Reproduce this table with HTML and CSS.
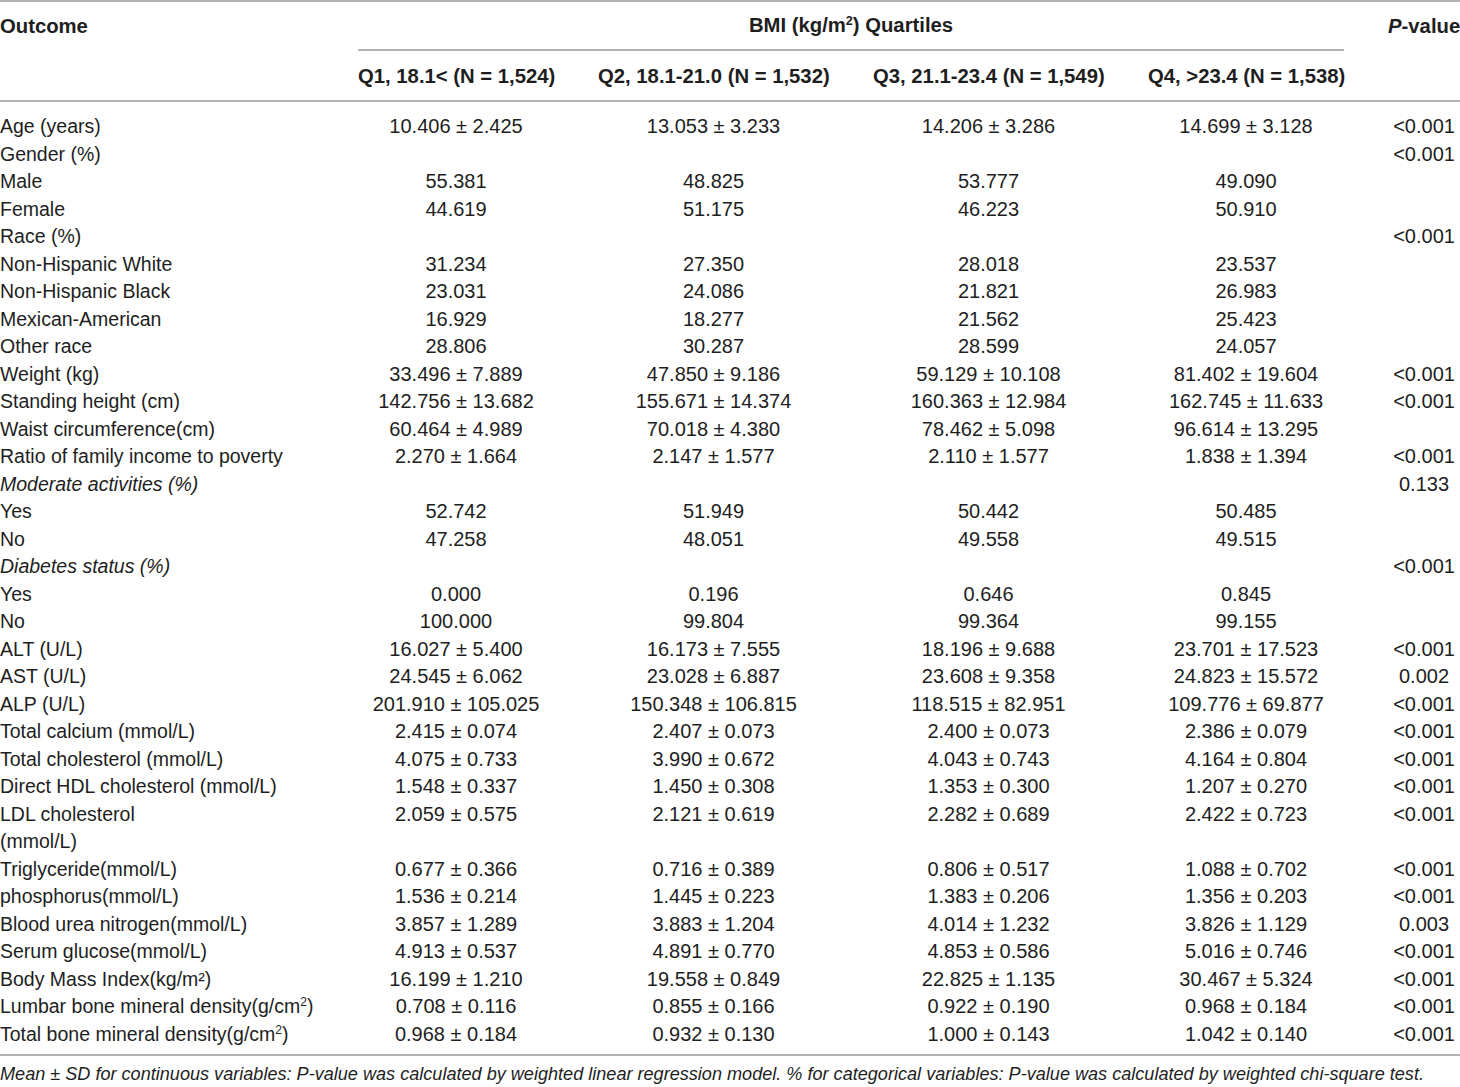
FILE: index.html
```html
<!DOCTYPE html>
<html>
<head>
    <meta charset="UTF-8">
    <title>BMI Quartiles</title>
    <link rel="stylesheet" href="styles.css">
</head>

<body>
    <table class="bmi-table">
        <colgroup>
            <col class="c-label">
            <col class="c-q1">
            <col class="c-q2">
            <col class="c-q3">
            <col class="c-q4">
            <col class="c-p">
        </colgroup>
        <thead>
            <tr class="head-top">
                <th class="label">Outcome</th>
                <th colspan="4" class="group"><div>BMI (kg/m<sup>2</sup>) Quartiles</div></th>
                <th><i>P</i>-value</th>
            </tr>
            <tr class="head-sub">
                <th></th>
                <th>Q1, 18.1&lt; (N = 1,524)</th>
                <th>Q2, 18.1-21.0 (N = 1,532)</th>
                <th>Q3, 21.1-23.4 (N = 1,549)</th>
                <th>Q4, &gt;23.4 (N = 1,538)</th>
                <th></th>
            </tr>
        </thead>
        <tbody>
            <tr><td>Age (years)</td><td>10.406 ± 2.425</td><td>13.053 ± 3.233</td><td>14.206 ± 3.286</td><td>14.699 ± 3.128</td><td>&lt;0.001</td></tr>
            <tr><td>Gender (%)</td><td></td><td></td><td></td><td></td><td>&lt;0.001</td></tr>
            <tr><td>Male</td><td>55.381</td><td>48.825</td><td>53.777</td><td>49.090</td><td></td></tr>
            <tr><td>Female</td><td>44.619</td><td>51.175</td><td>46.223</td><td>50.910</td><td></td></tr>
            <tr><td>Race (%)</td><td></td><td></td><td></td><td></td><td>&lt;0.001</td></tr>
            <tr><td>Non-Hispanic White</td><td>31.234</td><td>27.350</td><td>28.018</td><td>23.537</td><td></td></tr>
            <tr><td>Non-Hispanic Black</td><td>23.031</td><td>24.086</td><td>21.821</td><td>26.983</td><td></td></tr>
            <tr><td>Mexican-American</td><td>16.929</td><td>18.277</td><td>21.562</td><td>25.423</td><td></td></tr>
            <tr><td>Other race</td><td>28.806</td><td>30.287</td><td>28.599</td><td>24.057</td><td></td></tr>
            <tr><td>Weight (kg)</td><td>33.496 ± 7.889</td><td>47.850 ± 9.186</td><td>59.129 ± 10.108</td><td>81.402 ± 19.604</td><td>&lt;0.001</td></tr>
            <tr><td>Standing height (cm)</td><td>142.756 ± 13.682</td><td>155.671 ± 14.374</td><td>160.363 ± 12.984</td><td>162.745 ± 11.633</td><td>&lt;0.001</td></tr>
            <tr><td>Waist circumference(cm)</td><td>60.464 ± 4.989</td><td>70.018 ± 4.380</td><td>78.462 ± 5.098</td><td>96.614 ± 13.295</td><td></td></tr>
            <tr><td>Ratio of family income to poverty</td><td>2.270 ± 1.664</td><td>2.147 ± 1.577</td><td>2.110 ± 1.577</td><td>1.838 ± 1.394</td><td>&lt;0.001</td></tr>
            <tr><td><i>Moderate activities (%)</i></td><td></td><td></td><td></td><td></td><td>0.133</td></tr>
            <tr><td>Yes</td><td>52.742</td><td>51.949</td><td>50.442</td><td>50.485</td><td></td></tr>
            <tr><td>No</td><td>47.258</td><td>48.051</td><td>49.558</td><td>49.515</td><td></td></tr>
            <tr><td><i>Diabetes status (%)</i></td><td></td><td></td><td></td><td></td><td>&lt;0.001</td></tr>
            <tr><td>Yes</td><td>0.000</td><td>0.196</td><td>0.646</td><td>0.845</td><td></td></tr>
            <tr><td>No</td><td>100.000</td><td>99.804</td><td>99.364</td><td>99.155</td><td></td></tr>
            <tr><td>ALT (U/L)</td><td>16.027 ± 5.400</td><td>16.173 ± 7.555</td><td>18.196 ± 9.688</td><td>23.701 ± 17.523</td><td>&lt;0.001</td></tr>
            <tr><td>AST (U/L)</td><td>24.545 ± 6.062</td><td>23.028 ± 6.887</td><td>23.608 ± 9.358</td><td>24.823 ± 15.572</td><td>0.002</td></tr>
            <tr><td>ALP (U/L)</td><td>201.910 ± 105.025</td><td>150.348 ± 106.815</td><td>118.515 ± 82.951</td><td>109.776 ± 69.877</td><td>&lt;0.001</td></tr>
            <tr><td>Total calcium (mmol/L)</td><td>2.415 ± 0.074</td><td>2.407 ± 0.073</td><td>2.400 ± 0.073</td><td>2.386 ± 0.079</td><td>&lt;0.001</td></tr>
            <tr><td>Total cholesterol (mmol/L)</td><td>4.075 ± 0.733</td><td>3.990 ± 0.672</td><td>4.043 ± 0.743</td><td>4.164 ± 0.804</td><td>&lt;0.001</td></tr>
            <tr><td>Direct HDL cholesterol (mmol/L)</td><td>1.548 ± 0.337</td><td>1.450 ± 0.308</td><td>1.353 ± 0.300</td><td>1.207 ± 0.270</td><td>&lt;0.001</td></tr>
            <tr><td>LDL cholesterol<br>(mmol/L)</td><td>2.059 ± 0.575</td><td>2.121 ± 0.619</td><td>2.282 ± 0.689</td><td>2.422 ± 0.723</td><td>&lt;0.001</td></tr>
            <tr><td>Triglyceride(mmol/L)</td><td>0.677 ± 0.366</td><td>0.716 ± 0.389</td><td>0.806 ± 0.517</td><td>1.088 ± 0.702</td><td>&lt;0.001</td></tr>
            <tr><td>phosphorus(mmol/L)</td><td>1.536 ± 0.214</td><td>1.445 ± 0.223</td><td>1.383 ± 0.206</td><td>1.356 ± 0.203</td><td>&lt;0.001</td></tr>
            <tr><td>Blood urea nitrogen(mmol/L)</td><td>3.857 ± 1.289</td><td>3.883 ± 1.204</td><td>4.014 ± 1.232</td><td>3.826 ± 1.129</td><td>0.003</td></tr>
            <tr><td>Serum glucose(mmol/L)</td><td>4.913 ± 0.537</td><td>4.891 ± 0.770</td><td>4.853 ± 0.586</td><td>5.016 ± 0.746</td><td>&lt;0.001</td></tr>
            <tr><td>Body Mass Index(kg/m²)</td><td>16.199 ± 1.210</td><td>19.558 ± 0.849</td><td>22.825 ± 1.135</td><td>30.467 ± 5.324</td><td>&lt;0.001</td></tr>
            <tr><td>Lumbar bone mineral density(g/cm<sup>2</sup>)</td><td>0.708 ± 0.116</td><td>0.855 ± 0.166</td><td>0.922 ± 0.190</td><td>0.968 ± 0.184</td><td>&lt;0.001</td></tr>
            <tr><td>Total bone mineral density(g/cm<sup>2</sup>)</td><td>0.968 ± 0.184</td><td>0.932 ± 0.130</td><td>1.000 ± 0.143</td><td>1.042 ± 0.140</td><td>&lt;0.001</td></tr>
        </tbody>
    </table>

    <p class="note">Mean ± SD for continuous variables: P-value was calculated by weighted linear regression model. % for categorical variables: P-value was calculated by weighted chi-square test.</p>
</body>
</html>
```

FILE: styles.css
```css
body { margin: 0; font-family: "Liberation Sans", Arial, sans-serif; font-size: 20px; color: #1e1e1e; background: white; }

.bmi-table {
    width: 1460px;
    table-layout: fixed;
    border-collapse: collapse;
    border-top: 2px solid #b3b3b3;
    border-bottom: 2px solid #b3b3b3;
}
.c-label { width: 336px; }
.c-q1 { width: 240px; }
.c-q2 { width: 275px; }
.c-q3 { width: 275px; }
.c-q4 { width: 240px; }
.c-p { width: 94px; }

th { font-weight: bold; font-size: 20.3px; text-align: center; padding: 0 22px; white-space: nowrap; }
th.label { text-align: left; padding-left: 0; }
.head-top th { height: 48px; vertical-align: middle; }
.head-top th.group { vertical-align: bottom; }
.group div { line-height: 47px; border-bottom: 2px solid #b3b3b3; }
.head-sub th { height: 48px; border-bottom: 2px solid #b3b3b3; padding-top: 1px; }
.head-top th:last-child, .head-sub th:last-child { padding: 0 0 0 22px; }

td { padding: 0 22px; line-height: 27.5px; text-align: center; vertical-align: top; white-space: nowrap; }
td:first-child { text-align: left; padding-left: 0; font-size: 19.5px; }
td:last-child { padding: 0 0 0 22px; }
tbody tr:first-child td { padding-top: 11px; }
tbody tr:last-child td { padding-bottom: 6px; }

sup { font-size: 0.62em; line-height: 0; vertical-align: 0.55em; }

.note { margin: 0; padding-top: 5px; font-size: 18.1px; font-style: italic; line-height: 27.5px; white-space: nowrap; }
```
